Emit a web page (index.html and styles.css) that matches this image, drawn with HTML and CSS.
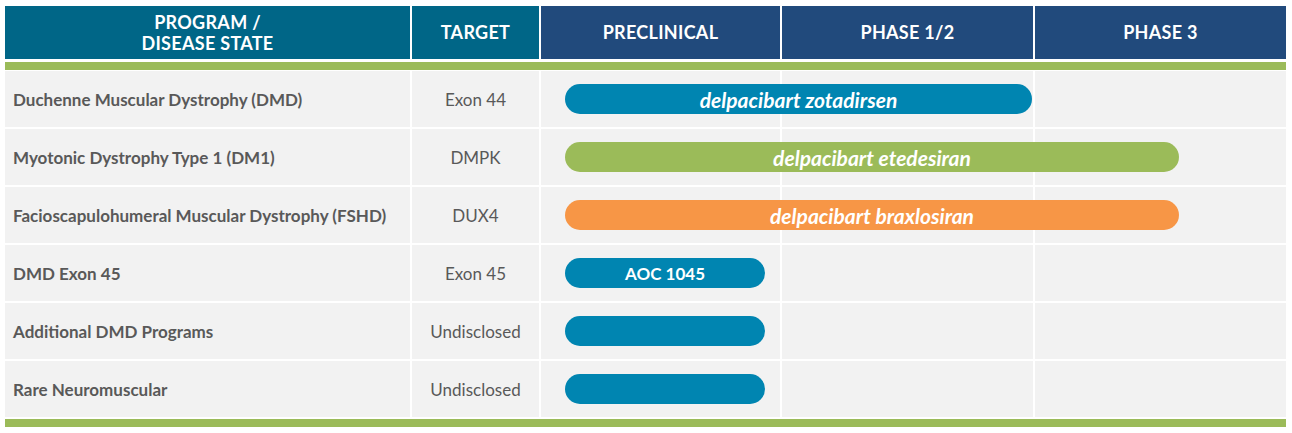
FILE: index.html
```html
<!DOCTYPE html>
<html>
<head>
<meta charset="utf-8">
<link rel="stylesheet" href="styles.css">
</head>
<body>
<div class="pipeline">
  <div class="head">
    <div class="hcell teal">PROGRAM /<br>DISEASE STATE</div>
    <div class="hcell teal">TARGET</div>
    <div class="hcell navy">PRECLINICAL</div>
    <div class="hcell navy">PHASE 1/2</div>
    <div class="hcell navy">PHASE 3</div>
  </div>
  <div class="rule top"></div>
  <div class="rows">
    <div class="row">
      <div class="cell name">Duchenne Muscular Dystrophy (DMD)</div>
      <div class="cell target">Exon 44</div>
      <div class="cell c3"></div><div class="cell c4"></div><div class="cell c5"></div>
      <div class="pill blue to-p2"><em>delpacibart zotadirsen</em></div>
    </div>
    <div class="row">
      <div class="cell name">Myotonic Dystrophy Type 1 (DM1)</div>
      <div class="cell target">DMPK</div>
      <div class="cell c3"></div><div class="cell c4"></div><div class="cell c5"></div>
      <div class="pill green to-p3"><em>delpacibart etedesiran</em></div>
    </div>
    <div class="row">
      <div class="cell name">Facioscapulohumeral Muscular Dystrophy (FSHD)</div>
      <div class="cell target">DUX4</div>
      <div class="cell c3"></div><div class="cell c4"></div><div class="cell c5"></div>
      <div class="pill orange to-p3"><em>delpacibart braxlosiran</em></div>
    </div>
    <div class="row">
      <div class="cell name">DMD Exon 45</div>
      <div class="cell target">Exon 45</div>
      <div class="cell c3"></div><div class="cell c4"></div><div class="cell c5"></div>
      <div class="pill blue pre">AOC 1045</div>
    </div>
    <div class="row">
      <div class="cell name">Additional DMD Programs</div>
      <div class="cell target">Undisclosed</div>
      <div class="cell c3"></div><div class="cell c4"></div><div class="cell c5"></div>
      <div class="pill blue pre"></div>
    </div>
    <div class="row">
      <div class="cell name">Rare Neuromuscular</div>
      <div class="cell target">Undisclosed</div>
      <div class="cell c3"></div><div class="cell c4"></div><div class="cell c5"></div>
      <div class="pill blue pre"></div>
    </div>
  </div>
  <div class="rule bottom"></div>
</div>
</body>
</html>
```

FILE: styles.css
```css
html, body {
  margin: 0;
  padding: 0;
  background: #ffffff;
}
body {
  padding: 6px 0 0 5px;
  font-family: Lato, "Open Sans", "Liberation Sans", sans-serif;
}
.pipeline {
  width: 1281px;
}
.head, .row {
  display: grid;
  grid-template-columns: 405px 127px 239px 251px 251px;
  column-gap: 2px;
}
.head {
  height: 53px;
}
.hcell {
  display: flex;
  align-items: center;
  justify-content: center;
  text-align: center;
  color: #ffffff;
  font-weight: 700;
  font-size: 18px;
  line-height: 21px;
  letter-spacing: 0.3px;
}
.teal { background: #006687; }
.navy { background: #214a7c; }
.rule {
  background: #9bbb59;
  height: 8px;
}
.rule.top { margin-top: 3px; }
.rule.bottom { margin-top: 2px; }
.rows {
  margin-top: 1px;
  display: flex;
  flex-direction: column;
  row-gap: 2px;
}
.row {
  height: 56px;
}
.cell {
  grid-row: 1;
  background: #f2f2f2;
  display: flex;
  align-items: center;
  color: #595959;
  font-size: 17px;
}
.cell.name {
  grid-column: 1;
  font-weight: 700;
  padding-left: 8px;
}
.cell.target {
  grid-column: 2;
  justify-content: center;
}
.c3 { grid-column: 3; }
.c4 { grid-column: 4; }
.c5 { grid-column: 5; }
.pill {
  grid-row: 1;
  align-self: center;
  height: 30px;
  border-radius: 15px;
  margin-left: 24px;
  display: flex;
  align-items: center;
  justify-content: center;
  color: #ffffff;
  font-weight: 700;
  font-size: 17px;
}
.pill em {
  font-style: italic;
  font-size: 21px;
}
.blue { background: #0085b1; }
.green { background: #9bbb59; }
.orange { background: #f79646; }
.pill.to-p2 { grid-column: 3 / span 2; margin-right: 1px; }
.pill.to-p3 { grid-column: 3 / span 3; margin-right: 107px; }
.pill.pre { grid-column: 3; margin-right: 15px; }
```
